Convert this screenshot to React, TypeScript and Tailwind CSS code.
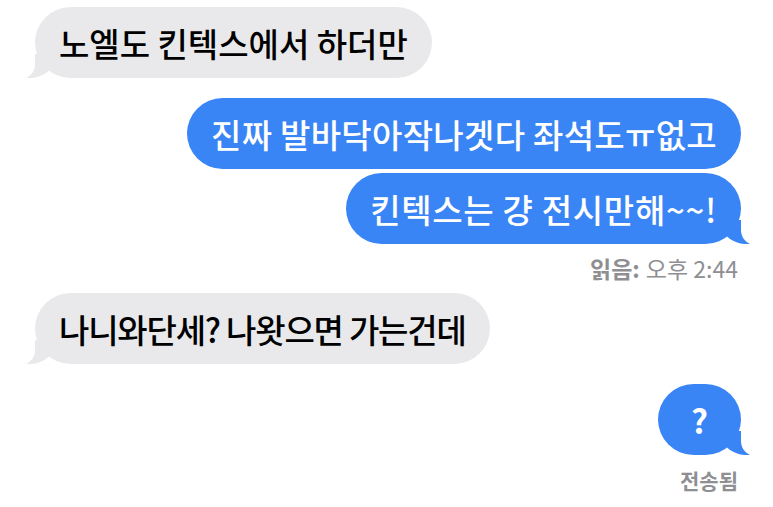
import React from 'react';

const FONT = '"Noto Sans CJK KR", "Noto Sans", sans-serif';

function Tail({ side, color }: { side: 'left' | 'right'; color: string }) {
  const d =
    side === 'left'
      ? 'M9 0 V10 C9 16 6 21 0 24 C8 24.6 15 22.5 20 19 L26 14 V0 Z'
      : 'M17 0 V10 C17 16 20 21 26 24 C18 24.6 11 22.5 6 19 L0 14 V0 Z';
  return (
    <svg
      width="26"
      height="24"
      viewBox="0 0 26 24"
      className={`absolute bottom-0 ${side === 'left' ? 'left-[-9px]' : 'right-[-9px]'}`}
    >
      <path d={d} fill={color} />
    </svg>
  );
}

function Bubble({
  side,
  text,
  tail = true,
  className = '',
}: {
  side: 'left' | 'right';
  text: string;
  tail?: boolean;
  className?: string;
}) {
  const mine = side === 'right';
  const color = mine ? '#3a85f5' : '#e9e9eb';
  return (
    <div
      className={`relative h-[71px] rounded-[36px] flex items-center justify-center px-[24px] text-[33px] leading-[38px] font-medium whitespace-nowrap ${
        mine ? 'bg-[#3a85f5] text-white' : 'bg-[#e9e9eb] text-black'
      } ${className}`}
    >
      {tail && <Tail side={side} color={color} />}
      <span className="relative">{text}</span>
    </div>
  );
}

export default function App() {
  return (
    <div
      className="w-[773px] h-[507px] bg-white overflow-hidden flex flex-col pt-[7px]"
      style={{ fontFamily: FONT }}
    >
      {/* received */}
      <div className="flex pl-[35px]">
        <Bubble side="left" text="노엘도 킨텍스에서 하더만" />
      </div>

      {/* sent */}
      <div className="flex flex-col items-end pr-[32px] mt-[20px] gap-[4px]">
        <Bubble side="right" text="진짜 발바닥아작나겟다 좌석도ㅠ없고" tail={false} className="tracking-[0.3px]" />
        <Bubble side="right" text="킨텍스는 걍 전시만해~~!" className="tracking-[0.7px]" />
      </div>
      <div className="flex justify-end pr-[35px] mt-[10px] text-[23px] leading-[29px] text-[#8e8e93]">
        <span className="font-semibold">읽음:</span>
        <span className="ml-[6px]">오후 2:44</span>
      </div>

      {/* received */}
      <div className="flex pl-[35px] mt-[10px]">
        <Bubble side="left" text="나니와단세? 나왓으면 가는건데" className="tracking-[-1.2px]" />
      </div>

      {/* sent */}
      <div className="flex justify-end pr-[32px] mt-[20px]">
        <Bubble side="right" text="?" className="w-[83px] h-[69px] px-0 font-semibold" />
      </div>
      <div className="flex justify-end pr-[35px] mt-[12px] text-[21px] leading-[26px] font-semibold text-[#8e8e93]">
        전송됨
      </div>
    </div>
  );
}
